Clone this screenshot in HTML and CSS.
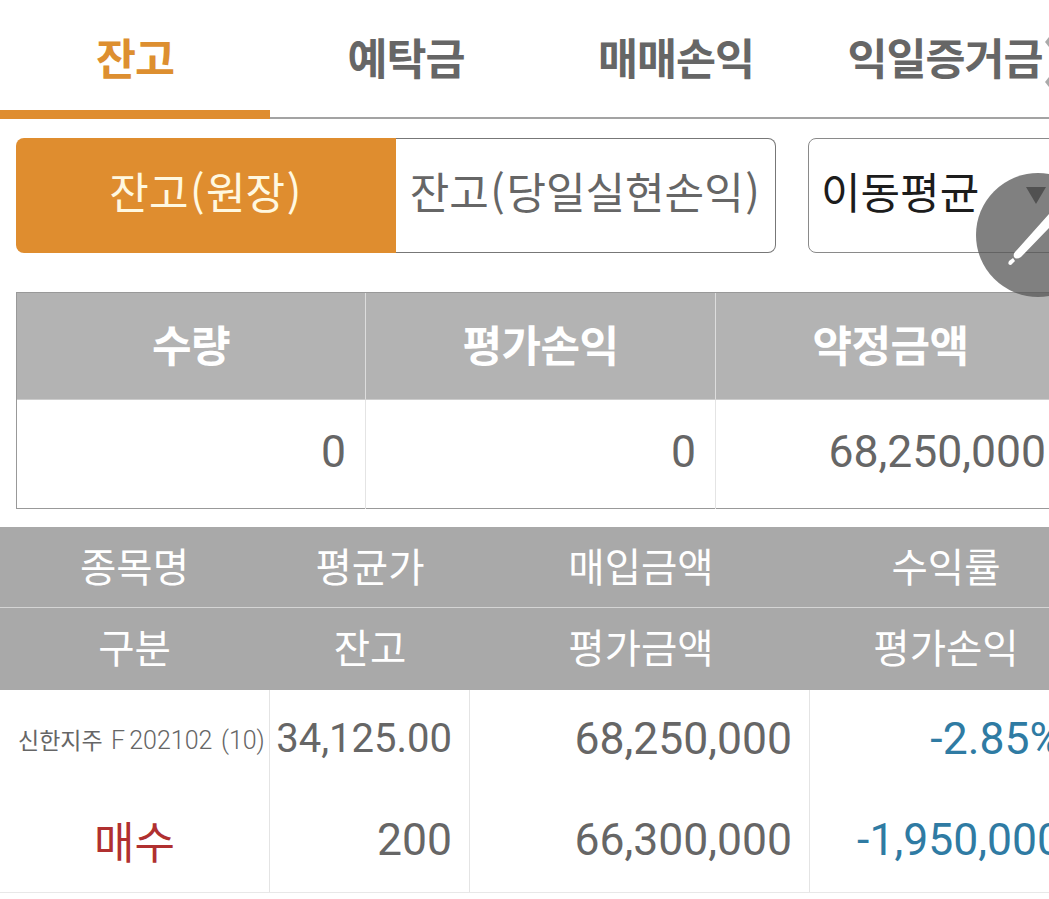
FILE: index.html
```html
<!DOCTYPE html>
<html lang="ko">
<head>
    <meta charset="utf-8">
    <title>잔고</title>
    <link rel="stylesheet" href="styles.css">
</head>
<body>
    <div class="page">
        <div class="tabs">
            <div class="tab active">잔고</div>
            <div class="tab">예탁금</div>
            <div class="tab">매매손익</div>
            <div class="tab">익일증거금</div>
        </div>

        <div class="filters">
            <div class="segment">
                <div class="seg on">잔고<span class="paren">(</span>원장<span class="paren">)</span></div>
                <div class="seg">잔고<span class="paren">(</span>당일실현손익<span class="paren">)</span></div>
            </div>
            <div class="select">이동평균<span class="arrow"></span></div>
        </div>

        <div class="summary">
            <div class="sum-head">수량</div>
            <div class="sum-head">평가손익</div>
            <div class="sum-head">약정금액</div>
            <div class="sum-val">0</div>
            <div class="sum-val">0</div>
            <div class="sum-val">68,250,000</div>
        </div>

        <div class="list-head first">
            <div>종목명</div>
            <div>평균가</div>
            <div>매입금액</div>
            <div>수익률</div>
        </div>
        <div class="list-head second">
            <div>구분</div>
            <div>잔고</div>
            <div>평가금액</div>
            <div>평가손익</div>
        </div>

        <div class="rows">
            <div class="cell name">신한지주 <span class="code">F 202102</span> <span class="code">(10)</span></div>
            <div class="cell num price">34,125.00</div>
            <div class="cell num">68,250,000</div>
            <div class="cell num blue">-2.85%</div>
            <div class="cell buy low">매수</div>
            <div class="cell num low">200</div>
            <div class="cell num low">66,300,000</div>
            <div class="cell num blue low">-1,950,000</div>
        </div>
    </div>

    <svg class="edge-mark" width="4" height="54" viewBox="0 0 4 54">
        <path d="M0 7 L4 2 L4 12 Z" fill="#aaa"/>
        <path d="M0 47 L4 42 L4 52 Z" fill="#aaa"/>
    </svg>

    <div class="fab">
        <svg width="73" height="124" viewBox="0 0 73 124">
            <path d="M39 79 L73 41 L73 55 L45 84 Q40 87 38 84 Q37 81 39 79 Z" fill="#fff"/>
            <path d="M37 85 L39 88 L35 92 Q31 92 33 88 Z" fill="#fff"/>
        </svg>
    </div>
</body>
</html>
```

FILE: styles.css
```css
html, body {
    margin: 0;
    height: 899px;
    overflow: hidden;
    background: #fff;
}

body {
    font-family: "Noto Sans CJK KR", Roboto, sans-serif;
    color: #666;
    position: relative;
}

.page {
    width: 1049px;
    overflow: hidden;
}

/* top tabs */
.tabs {
    display: grid;
    grid-template-columns: 270px 272px 268px 270px;
    height: 119px;
    box-sizing: border-box;
    border-bottom: 2px solid #a3a3a3;
}

.tab {
    height: 119px;
    box-sizing: border-box;
    padding-top: 27px;
    text-align: center;
    font-size: 43.5px;
    line-height: 60px;
    font-weight: 700;
    letter-spacing: -1px;
    white-space: nowrap;
}

.tab.active {
    color: #dd8f30;
    border-bottom: 9px solid #df8d2f;
}

.edge-mark {
    position: absolute;
    left: 1045px;
    top: 35px;
}

/* filter buttons */
.filters {
    display: flex;
    margin: 19px 0 0 16px;
    gap: 32px;
    height: 115px;
}

.segment {
    display: flex;
    flex: 0 0 760px;
}

.seg {
    flex: 1;
    box-sizing: border-box;
    border: 1px solid #777;
    border-left: 0;
    border-radius: 0 8px 8px 0;
    text-align: center;
    font-size: 43px;
    line-height: 102px;
    white-space: nowrap;
}

.seg.on {
    flex: 0 0 380px;
    border: 0;
    border-radius: 8px 0 0 8px;
    line-height: 104px;
    background: #df8d2f;
    color: #fff8e0;
}

.paren {
    margin: 0 1.5px;
}

.select {
    flex: 0 0 280px;
    box-sizing: border-box;
    border: 1px solid #8a8a8a;
    border-radius: 8px;
    padding-left: 12px;
    font-size: 43px;
    line-height: 102px;
    color: #1c1c1c;
    position: relative;
}

.arrow {
    position: absolute;
    left: 217px;
    top: 48px;
    border-left: 10px solid transparent;
    border-right: 10px solid transparent;
    border-top: 17px solid #444;
}

/* summary table */
.summary {
    display: grid;
    grid-template-columns: 348px 350px 350px;
    grid-template-rows: 107px 109px;
    margin: 39px 0 0 16px;
    box-sizing: border-box;
    width: 1049px;
    height: 217px;
    border: 1px solid #999;
    border-right: 0;
}

.sum-head {
    background: #b3b3b3;
    color: #fff;
    font-size: 43px;
    font-weight: 700;
    text-align: center;
    line-height: 100px;
    border-left: 1px solid #ddd;
    border-bottom: 1px solid #ccc;
    letter-spacing: -0.5px;
}

.sum-head:first-child,
.sum-val:nth-child(4) {
    border-left: 0;
}

.sum-val {
    font-family: Roboto, sans-serif;
    font-size: 44.5px;
    line-height: 104px;
    text-align: right;
    padding-right: 19px;
    border-left: 1px solid #e4e4e4;
}

/* list */
.list-head {
    display: grid;
    grid-template-columns: 269px 202px 340px 270px;
    width: 1081px;
    background: #a9a9a9;
    color: #fff;
    font-size: 39.5px;
    text-align: center;
}

.list-head.first {
    margin-top: 18px;
    height: 80px;
    line-height: 75px;
    border-bottom: 1px solid #d4d4d4;
}

.list-head.second {
    height: 82px;
    line-height: 76px;
}

.rows {
    display: grid;
    grid-template-columns: 269px 200px 340px 270px;
    grid-template-rows: 100px 102px;
    width: 1079px;
    border-bottom: 1px solid #e8e8e8;
}

.cell {
    border-left: 1px solid #e4e4e4;
    font-family: Roboto, "Noto Sans CJK KR", sans-serif;
    font-size: 44.5px;
    line-height: 98px;
    white-space: nowrap;
    overflow: hidden;
}

.cell.low {
    line-height: 101px;
}

.cell.num {
    text-align: right;
    padding-right: 17px;
}

.cell.price {
    font-size: 40px;
}

.cell.name {
    border-left: 0;
    font-family: "Noto Sans CJK KR", sans-serif;
    font-size: 23px;
    padding-left: 18px;
}

.code {
    font-family: Roboto, sans-serif;
    font-size: 25px;
    font-weight: 300;
    margin-left: 2px;
    word-spacing: -2px;
}

.cell.buy {
    border-left: 0;
    text-align: center;
    color: #b03030;
    font-family: "Noto Sans CJK KR", sans-serif;
    font-size: 44px;
}

.cell.blue {
    color: #2f7ba3;
}

/* floating button */
.fab {
    position: absolute;
    left: 976px;
    top: 173px;
    width: 124px;
    height: 124px;
    border-radius: 50%;
    background: rgba(85, 85, 85, 0.75);
}
```
